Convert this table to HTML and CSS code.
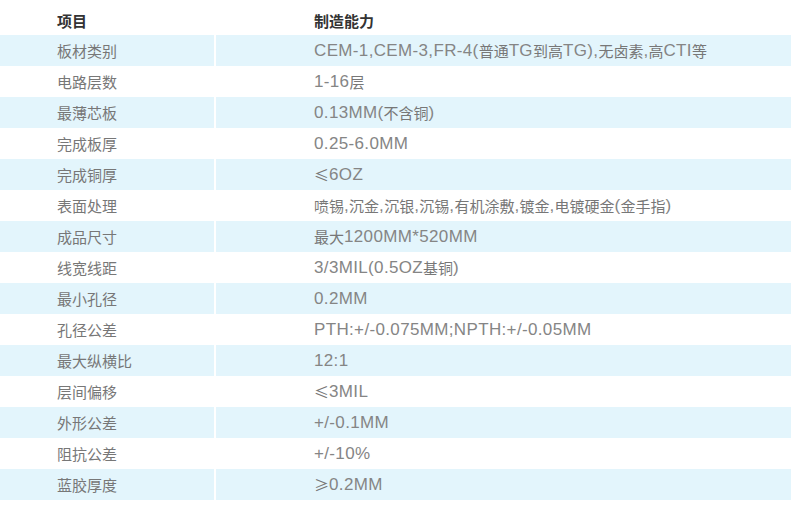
FILE: index.html
```html
<!DOCTYPE html>
<html lang="zh">
<head>
<meta charset="utf-8">
<link rel="stylesheet" href="styles.css">
</head>
<body>
<div class="table">
  <div class="row head"><div class="cell c1">项目</div><div class="cell c2">制造能力</div></div>
  <div class="row"><div class="cell c1">板材类别</div><div class="cell c2"><span class="en">CEM-1,CEM-3,FR-4(</span>普通<span class="en">TG</span>到高<span class="en">TG),</span>无卤素<span class="en">,</span>高<span class="en">CTI</span>等</div></div>
  <div class="row"><div class="cell c1">电路层数</div><div class="cell c2"><span class="en">1-16</span>层</div></div>
  <div class="row"><div class="cell c1">最薄芯板</div><div class="cell c2"><span class="en">0.13MM(</span>不含铜<span class="en">)</span></div></div>
  <div class="row"><div class="cell c1">完成板厚</div><div class="cell c2"><span class="en">0.25-6.0MM</span></div></div>
  <div class="row"><div class="cell c1">完成铜厚</div><div class="cell c2">≤<span class="en">6OZ</span></div></div>
  <div class="row"><div class="cell c1">表面处理</div><div class="cell c2">喷锡<span class="en">,</span>沉金<span class="en">,</span>沉银<span class="en">,</span>沉锡<span class="en">,</span>有机涂敷<span class="en">,</span>镀金<span class="en">,</span>电镀硬金<span class="en">(</span>金手指<span class="en">)</span></div></div>
  <div class="row"><div class="cell c1">成品尺寸</div><div class="cell c2">最大<span class="en">1200MM*520MM</span></div></div>
  <div class="row"><div class="cell c1">线宽线距</div><div class="cell c2"><span class="en">3/3MIL(0.5OZ</span>基铜<span class="en">)</span></div></div>
  <div class="row"><div class="cell c1">最小孔径</div><div class="cell c2"><span class="en">0.2MM</span></div></div>
  <div class="row"><div class="cell c1">孔径公差</div><div class="cell c2"><span class="en">PTH:+/-0.075MM;NPTH:+/-0.05MM</span></div></div>
  <div class="row"><div class="cell c1">最大纵横比</div><div class="cell c2"><span class="en">12:1</span></div></div>
  <div class="row"><div class="cell c1">层间偏移</div><div class="cell c2">≤<span class="en">3MIL</span></div></div>
  <div class="row"><div class="cell c1">外形公差</div><div class="cell c2"><span class="en">+/-0.1MM</span></div></div>
  <div class="row"><div class="cell c1">阻抗公差</div><div class="cell c2"><span class="en">+/-10%</span></div></div>
  <div class="row"><div class="cell c1">蓝胶厚度</div><div class="cell c2">≥<span class="en">0.2MM</span></div></div>
</div>
</body>
</html>
```

FILE: styles.css
```css
html, body {
  margin: 0;
  padding: 0;
  background: #fff;
}
body {
  font-family: "Noto Sans CJK SC", sans-serif;
  font-size: 15px;
  color: #777;
}
.table {
  width: 791px;
  display: flex;
  flex-direction: column;
}
.row {
  display: flex;
  gap: 2px;
  height: 31px;
}
.cell {
  display: flex;
  align-items: center;
  white-space: pre;
  line-height: 1;
}
.c1 {
  width: 214px;
  padding-left: 57px;
  box-sizing: border-box;
}
.c2 {
  flex: 1;
  padding-left: 98px;
}
.en {
  font-family: "Liberation Sans", sans-serif;
  font-size: 17px;
  letter-spacing: 0.35px;
  color: #858585;
}
.row:nth-child(even) .cell {
  background: #e3f5fc;
}
.head {
  height: 35px;
}
.head .cell {
  color: #333;
  font-weight: bold;
  padding-top: 5px;
  box-sizing: border-box;
}
```
